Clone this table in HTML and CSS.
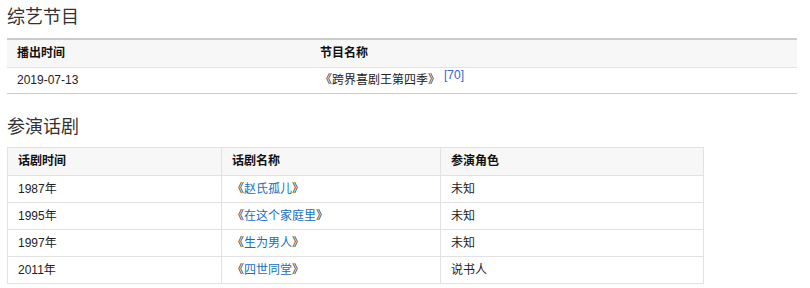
FILE: index.html
```html
<!DOCTYPE html>
<html lang="zh-CN">
<head>
<meta charset="utf-8">
<title>综艺节目 参演话剧</title>
<link rel="stylesheet" href="styles.css">
</head>
<body>
<h2 class="title">综艺节目</h2>
<table class="t1">
  <colgroup><col class="c1a"><col></colgroup>
  <thead>
    <tr><th>播出时间</th><th>节目名称</th></tr>
  </thead>
  <tbody>
    <tr><td>2019-07-13</td><td>《跨界喜剧王第四季》<span class="sup">[70]</span></td></tr>
  </tbody>
</table>
<h2 class="title title2">参演话剧</h2>
<table class="t2">
  <colgroup><col class="c2a"><col class="c2b"><col class="c2c"></colgroup>
  <thead>
    <tr><th>话剧时间</th><th>话剧名称</th><th>参演角色</th></tr>
  </thead>
  <tbody>
    <tr><td>1987年</td><td>《<a class="lnk">赵氏孤儿</a>》</td><td>未知</td></tr>
    <tr><td>1995年</td><td>《<a class="lnk">在这个家庭里</a>》</td><td>未知</td></tr>
    <tr><td>1997年</td><td>《<a class="lnk">生为男人</a>》</td><td>未知</td></tr>
    <tr><td>2011年</td><td>《<a class="lnk">四世同堂</a>》</td><td>说书人</td></tr>
  </tbody>
</table>
</body>
</html>
```
FILE: styles.css
```css
html, body {
  margin: 0;
  background: #fff;
}
body {
  padding: 5px 13px 0 7px;
  font-family: "Liberation Sans", "Noto Sans CJK SC", sans-serif;
  font-size: 12px;
  color: #222;
}
.title {
  margin: 0;
  font-size: 18px;
  line-height: 24px;
  font-weight: normal;
  color: #333;
}
.title2 {
  margin-top: 21px;
}
table {
  border-collapse: collapse;
  table-layout: fixed;
}
th, td {
  padding: 0 10px;
  text-align: left;
  white-space: nowrap;
}
th {
  font-weight: bold;
  color: #111;
  background: #f7f7f7;
  line-height: 27px;
}
td {
  line-height: 26px;
}
.t1 {
  width: 790px;
  margin-top: 9px;
  border-top: 2px solid #cbcbcb;
}
.c1a { width: 303px; }
.t1 th {
  border-bottom: 1px solid #e3e3e3;
}
.t1 td {
  line-height: 25px;
  border-bottom: 1px solid #c6cbd1;
}
.sup {
  display: inline-block;
  vertical-align: top;
  line-height: 13px;
  margin-top: 1px;
  margin-left: 4px;
  color: #3366cc;
  font-size: 12px;
}
.t2 {
  width: 696px;
  margin-top: 8px;
}
.c2a { width: 214px; }
.c2b { width: 219px; }
.c2c { width: 263px; }
.t2 th, .t2 td {
  border: 1px solid #e2e2e2;
}
.lnk {
  color: #136ec2;
  text-decoration: none;
}
```
